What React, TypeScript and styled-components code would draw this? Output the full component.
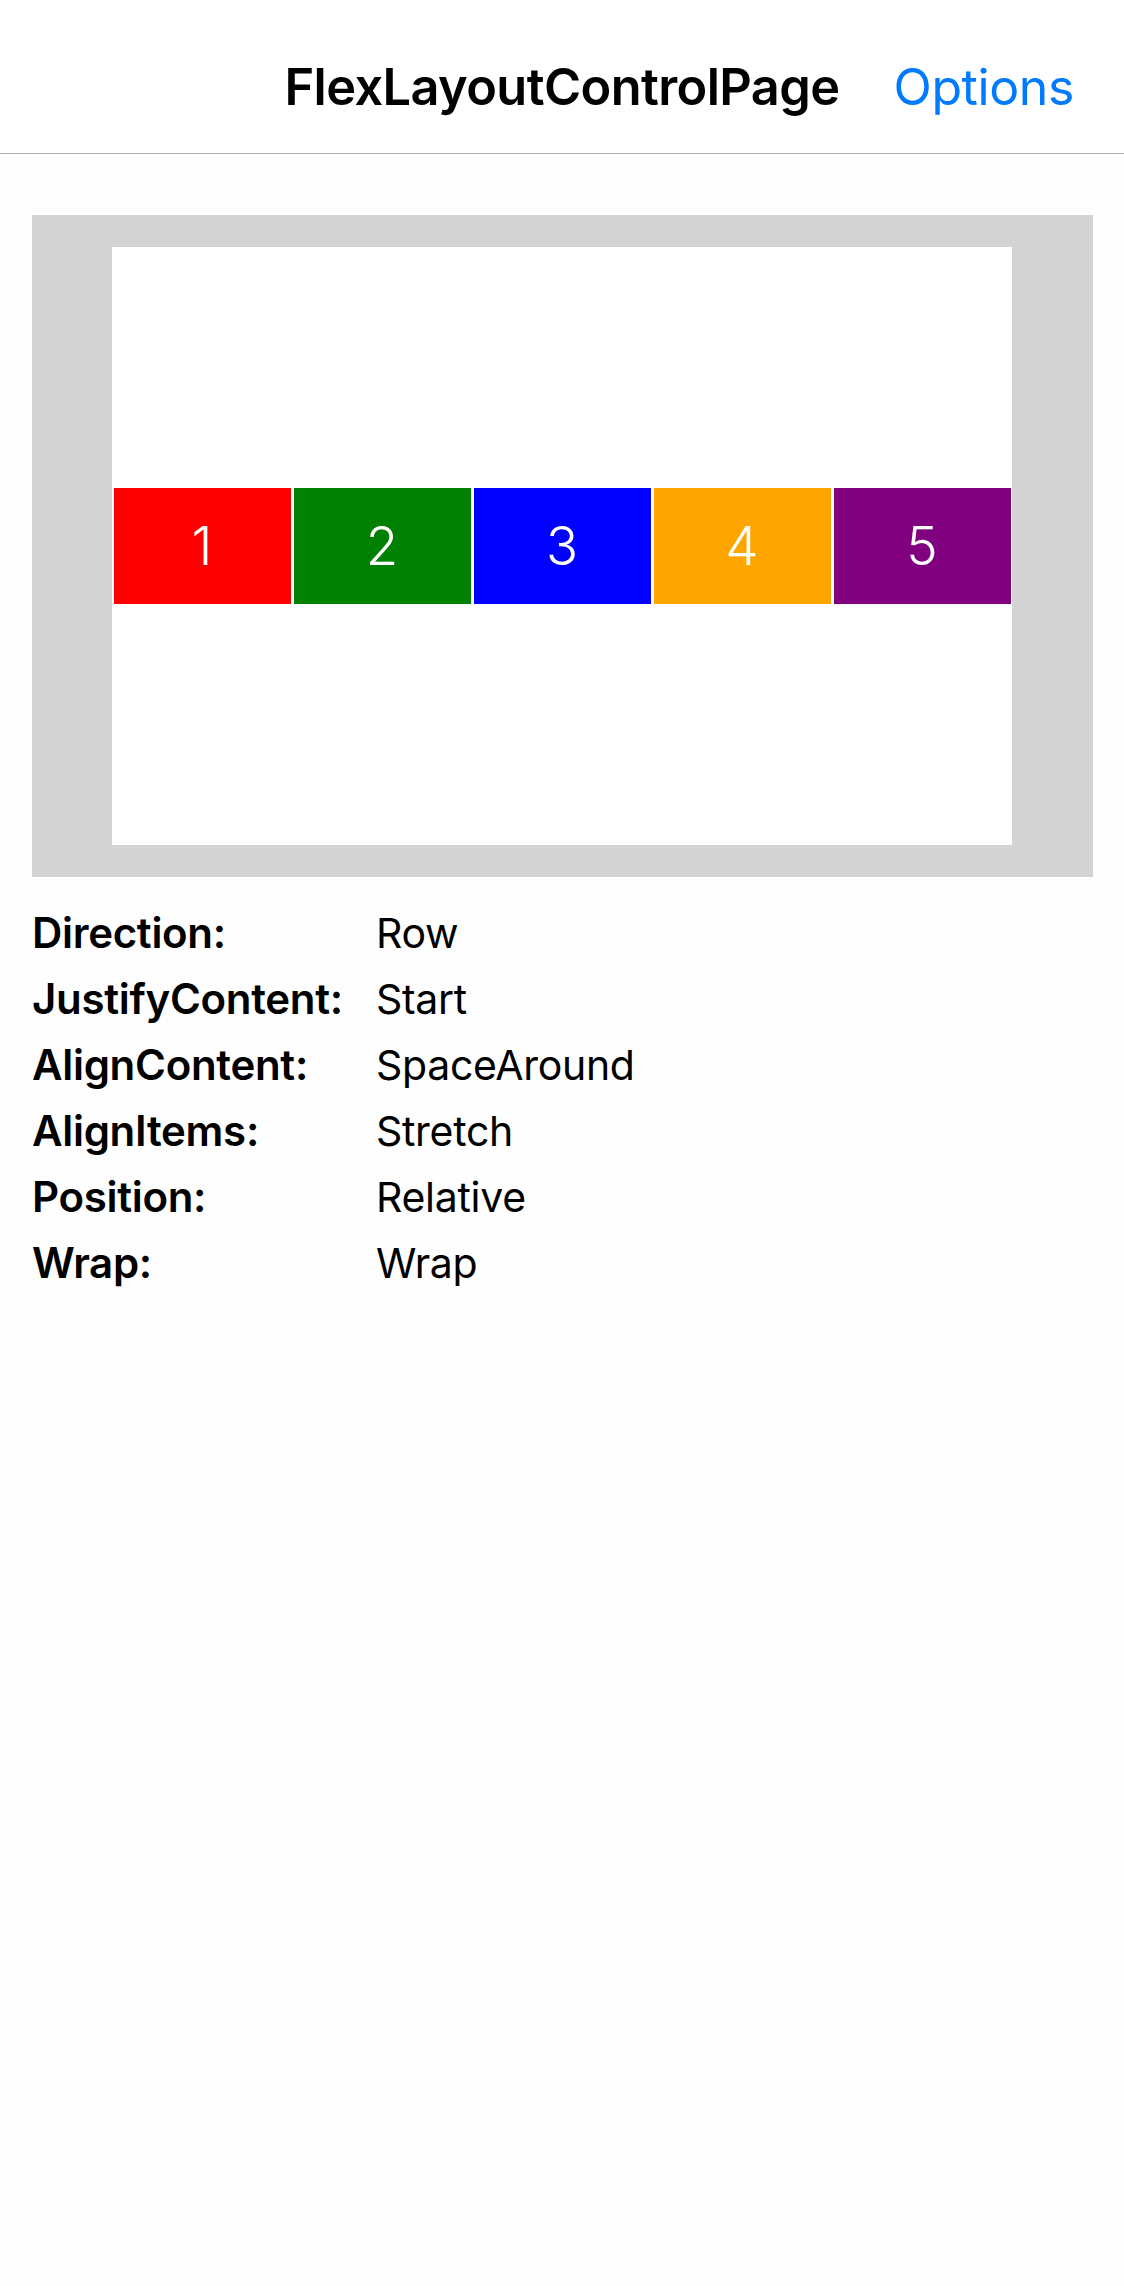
import React from 'react'
import styled, { createGlobalStyle } from 'styled-components'

const GlobalStyle = createGlobalStyle`
  html, body {
    margin: 0;
    padding: 0;
    background: #fefefe;
  }

  body {
    font-family: Inter, 'Noto Sans', 'Liberation Sans', sans-serif;
    color: #000;
  }
`

const Page = styled.div`
  min-height: 2286px;
  background: #fefefe;
`

const NavBar = styled.header`
  position: relative;
  height: 154px;
  box-sizing: border-box;
  padding-top: 20px;
  display: flex;
  align-items: center;
  justify-content: center;
  border-bottom: 1px solid #b2b2b2;
  background: #fff;
`

const Title = styled.h1`
  margin: 0;
  font-size: 50.5px;
  font-weight: 600;
  letter-spacing: -0.6px;
`

const OptionsButton = styled.button`
  position: absolute;
  right: 50px;
  top: calc(50% + 10px);
  transform: translateY(-50%);
  border: 0;
  padding: 0;
  background: none;
  font-family: inherit;
  font-size: 50px;
  font-weight: 400;
  letter-spacing: -0.4px;
  color: #007aff;
  cursor: pointer;
`

const Content = styled.main`
  padding: 61px 31px 0 32px;
`

const Stage = styled.section`
  height: 662px;
  box-sizing: border-box;
  padding: 32px 81px 32px 80px;
  background: #d3d3d3;
`

const FlexArea = styled.div`
  height: 100%;
  background: #fff;
  display: flex;
  flex-direction: row;
  flex-wrap: wrap;
  align-content: space-around;
  align-items: stretch;
  justify-content: flex-start;
`

const Item = styled.div<{ $color: string }>`
  width: 177px;
  height: 116px;
  margin: 0 1.5px;
  background: ${p => p.$color};
  display: flex;
  align-items: center;
  justify-content: center;
  color: #fff;
  font-size: 53px;
  font-weight: 300;
`

const Settings = styled.dl`
  margin: 23px 0 0;
  display: grid;
  grid-template-columns: 344px 1fr;
`

const Label = styled.dt`
  font-size: 42px;
  font-weight: 600;
  line-height: 66px;
  letter-spacing: -0.3px;
`

const Value = styled.dd`
  margin: 0;
  font-size: 41px;
  font-weight: 400;
  line-height: 66px;
  letter-spacing: -0.3px;
`

const items = [
  { n: 1, color: '#ff0000' },
  { n: 2, color: '#008000' },
  { n: 3, color: '#0000ff' },
  { n: 4, color: '#ffa500' },
  { n: 5, color: '#800080' }
]

const settings: [string, string][] = [
  ['Direction:', 'Row'],
  ['JustifyContent:', 'Start'],
  ['AlignContent:', 'SpaceAround'],
  ['AlignItems:', 'Stretch'],
  ['Position:', 'Relative'],
  ['Wrap:', 'Wrap']
]

const App: React.FunctionComponent = () => (
  <Page>
    <GlobalStyle />
    <NavBar>
      <Title>FlexLayoutControlPage</Title>
      <OptionsButton>Options</OptionsButton>
    </NavBar>
    <Content>
      <Stage>
        <FlexArea>
          {items.map(item => (
            <Item key={item.n} $color={item.color}>
              {item.n}
            </Item>
          ))}
        </FlexArea>
      </Stage>
      <Settings>
        {settings.map(([label, value]) => (
          <React.Fragment key={label}>
            <Label>{label}</Label>
            <Value>{value}</Value>
          </React.Fragment>
        ))}
      </Settings>
    </Content>
  </Page>
)

export default App
